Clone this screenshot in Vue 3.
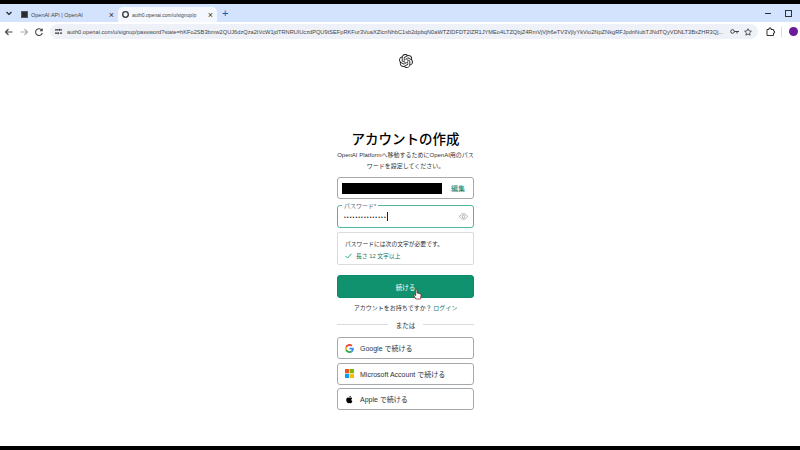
<script setup>
const url = 'auth0.openai.com/u/signup/password?state=hKFo2SB3bmw2QUJ6dzQza2tVcW1jdTRNRUlUczdPQU9tSEFpRKFur3VuaXZlcnNhbC1sb2dpbqN0aWTZIDFDT2lZR1JYMEo4LTZQbjZ4RmVjVjh6eTV3VjlyYkVio2NpZNkgRFJpdnNubTJNdTQyVDNLT3BxZHR3Qj...'
</script>

<template>
  <div class="screen">
    <div class="tabstrip">
      <svg class="chev" width="8" height="8" viewBox="0 0 8 8"><path d="M1.5 3l2.5 2.5L6.500 3" fill="none" stroke="#222" stroke-width="1.200"/></svg>
      <div class="tab">
        <span class="fav-api"></span>
        <span class="tab-title">OpenAI API | OpenAI</span>
        <span class="tab-x">×</span>
      </div>
      <div class="tab active">
        <svg class="fav-globe" width="7" height="7" viewBox="0 0 8 8"><circle cx="4" cy="4" r="3.200" fill="none" stroke="#333" stroke-width="1.500"/></svg>
        <span class="tab-title">auth0.openai.com/u/signup/p</span>
        <span class="tab-x">×</span>
      </div>
      <span class="plus">+</span>
      <div class="win">
        <span class="min"></span>
        <span class="restore"></span>
      </div>
    </div>

    <div class="toolbar">
      <svg width="10" height="10" viewBox="0 0 10 10"><path d="M8.500 5H2M4.500 2L1.500 5l3 3" fill="none" stroke="#444" stroke-width="1.100"/></svg>
      <svg width="10" height="10" viewBox="0 0 10 10"><path d="M1.500 5H8M5.500 2l3 3-3 3" fill="none" stroke="#aaa" stroke-width="1.100"/></svg>
      <svg width="10" height="10" viewBox="0 0 10 10"><path d="M8 3.500A3.400 3.400 0 1 0 8.300 6M8.200 1.500v2.300H5.900" fill="none" stroke="#444" stroke-width="1.100"/></svg>
      <div class="omnibox">
        <svg width="7" height="7" viewBox="0 0 7 7"><path d="M0 1.800h3.500M0 5.200h2M5 5.200h2M5.500 1.800H7" stroke="#333" stroke-width="1.200"/><circle cx="4.500" cy="1.800" r="1" fill="#333"/><circle cx="3.200" cy="5.200" r="1" fill="#333"/></svg>
        <span class="url">{{ url }}</span>
        <svg class="key" width="9" height="7" viewBox="0 0 9 7"><circle cx="2.500" cy="3.500" r="1.800" fill="none" stroke="#444"/><path d="M4.300 3.500H9M7 3.500v2" stroke="#444"/></svg>
        <svg width="8" height="8" viewBox="0 0 8 8"><path d="M4 .7l1 2.200 2.400.3-1.800 1.600.5 2.400L4 6 1.900 7.200l.5-2.400L.6 3.200 3 2.900z" fill="none" stroke="#333" stroke-width=".8"/></svg>
      </div>
      <svg class="ext" width="9" height="9" viewBox="0 0 9 9"><path d="M1 2.500h2V1h2v1.500h2.500V4H8.500v2H7.500v2.500H1z" fill="none" stroke="#333"/></svg>
      <span class="sep"></span>
      <span class="avatar"></span>
    </div>

    <main class="page">
      <svg class="logo" width="14" height="14" viewBox="0 0 24 24"><path fill="#202123" d="M22.2819 9.8211a5.9847 5.9847 0 0 0-.5157-4.9108 6.0462 6.0462 0 0 0-6.5098-2.9A6.0651 6.0651 0 0 0 4.9807 4.1818a5.9847 5.9847 0 0 0-3.9977 2.9 6.0462 6.0462 0 0 0 .7427 7.0966 5.98 5.98 0 0 0 .511 4.9107 6.051 6.051 0 0 0 6.5146 2.9001A5.9847 5.9847 0 0 0 13.2599 24a6.0557 6.0557 0 0 0 5.7718-4.2058 5.9894 5.9894 0 0 0 3.9977-2.9001 6.0557 6.0557 0 0 0-.7475-7.0729zm-9.022 12.6081a4.4755 4.4755 0 0 1-2.8764-1.0408l.1419-.0804 4.7783-2.7582a.7948.7948 0 0 0 .3927-.6813v-6.7369l2.02 1.1686a.071.071 0 0 1 .038.052v5.5826a4.504 4.504 0 0 1-4.4945 4.4944zm-9.6607-4.1254a4.4708 4.4708 0 0 1-.5346-3.0137l.142.0852 4.783 2.7582a.7712.7712 0 0 0 .7806 0l5.8428-3.3685v2.3324a.0804.0804 0 0 1-.0332.0615L9.74 19.9502a4.4992 4.4992 0 0 1-6.1408-1.6464zM2.3408 7.8956a4.485 4.485 0 0 1 2.3655-1.9728V11.6a.7664.7664 0 0 0 .3879.6765l5.8144 3.3543-2.0201 1.1685a.0757.0757 0 0 1-.071 0l-4.8303-2.7865A4.504 4.504 0 0 1 2.3408 7.872zm16.5963 3.8558L13.1038 8.364 15.1192 7.2a.0757.0757 0 0 1 .071 0l4.8303 2.7913a4.4944 4.4944 0 0 1-.6765 8.1042v-5.6772a.79.79 0 0 0-.407-.667zm2.0107-3.0231l-.142-.0852-4.7735-2.7818a.7759.7759 0 0 0-.7854 0L9.409 9.2297V6.8974a.0662.0662 0 0 1 .0284-.0615l4.8303-2.7866a4.4992 4.4992 0 0 1 6.6802 4.66zM8.3065 12.863l-2.02-1.1638a.0804.0804 0 0 1-.038-.0567V6.0742a4.4992 4.4992 0 0 1 7.3757-3.4537l-.142.0805L8.704 5.459a.7948.7948 0 0 0-.3927.6813zm1.0976-2.3654l2.602-1.4998 2.6069 1.4998v2.9994l-2.5974 1.4997-2.6067-1.4997Z"/></svg>

      <div class="form">
        <h1>アカウントの作成</h1>
        <p class="sub">OpenAI Platformへ移動するためにOpenAI用のパスワードを設定してください。</p>

        <div class="field email">
          <span class="redact"></span>
          <span class="edit">編集</span>
        </div>

        <div class="field pass">
          <span class="label">パスワード*</span>
          <span class="dots">•••••••••••••••</span><span class="caret"></span>
          <svg class="eye" width="9" height="7" viewBox="0 0 10 8"><path d="M.5 4C2 1.500 3.500.8 5 .8S8 1.500 9.500 4C8 6.500 6.500 7.200 5 7.200S2 6.500.5 4z" fill="none" stroke="#8a8f98" stroke-width=".8"/><circle cx="5" cy="4" r="1.500" fill="none" stroke="#8a8f98" stroke-width=".8"/></svg>
        </div>

        <div class="rules">
          <div>パスワードには次の文字が必要です。</div>
          <div class="rule">
            <svg width="7" height="6" viewBox="0 0 7 6"><path d="M.6 3l2 2L6.400.8" fill="none" stroke="#10a37f" stroke-width=".9"/></svg>
            <span>長さ 12 文字以上</span>
          </div>
        </div>

        <button class="continue">続ける
          <svg class="hand" width="9" height="11" viewBox="0 0 9 11"><path d="M2.800 10L.7 6.200l1-.5 1 1V1.500a.7.700 0 0 1 1.400 0V4l3 .7c.7.200 1 .6 1 1.200L7.500 10z" fill="#fff" stroke="#7a2b20" stroke-width=".8"/></svg>
        </button>

        <p class="login">アカウントをお持ちですか？ <span>ログイン</span></p>

        <div class="or"><span>または</span></div>

        <div class="socials">
          <button class="social">
            <svg width="9" height="9" viewBox="0 0 48 48"><path fill="#EA4335" d="M24 9.500c3.500 0 6.700 1.300 9.100 3.500l6.800-6.800C35.800 2.400 30.300 0 24 0 14.600 0 6.500 5.400 2.600 13.200l7.900 6.200C12.400 13.700 17.700 9.500 24 9.500z"/><path fill="#4285F4" d="M46.900 24.500c0-1.600-.1-3.100-.4-4.500H24v9h12.900c-.6 3-2.200 5.500-4.800 7.200l7.700 6c4.500-4.200 7.100-10.300 7.100-17.700z"/><path fill="#FBBC05" d="M10.500 28.600c-.5-1.400-.8-3-.8-4.600s.3-3.200.8-4.600l-7.900-6.200C.9 16.500 0 20.100 0 24s.9 7.500 2.600 10.800z"/><path fill="#34A853" d="M24 48c6.500 0 11.900-2.100 15.900-5.800l-7.700-6c-2.200 1.500-4.900 2.300-8.200 2.300-6.300 0-11.600-4.200-13.500-9.900l-7.900 6.200C6.500 42.600 14.600 48 24 48z"/></svg>
            <span>Google で続ける</span>
          </button>
          <button class="social">
            <svg width="9" height="9" viewBox="0 0 9 9"><rect width="4.200" height="4.200" fill="#f25022"/><rect x="4.800" width="4.200" height="4.200" fill="#7fba00"/><rect y="4.800" width="4.200" height="4.200" fill="#00a4ef"/><rect x="4.800" y="4.800" width="4.200" height="4.200" fill="#ffb900"/></svg>
            <span>Microsoft Account で続ける</span>
          </button>
          <button class="social">
            <svg width="9" height="9" viewBox="0 0 24 24"><path fill="#000" d="M17.050 12.600c0-2.600 2.100-3.800 2.200-3.900-1.200-1.800-3.100-2-3.700-2-1.600-.2-3.100.9-3.900.9s-2-.9-3.300-.9c-1.700 0-3.300 1-4.200 2.500-1.800 3.100-.5 7.700 1.300 10.200.9 1.200 1.900 2.600 3.200 2.600s1.800-.8 3.300-.8 2 .8 3.300.8 2.300-1.200 3.100-2.500c1-1.400 1.400-2.800 1.400-2.900-.1 0-2.700-1-2.700-4zM14.500 4.900c.7-.9 1.200-2 1-3.200-1 0-2.200.7-3 1.500-.6.800-1.200 2-1 3.100 1.100.1 2.300-.5 3-1.400z"/></svg>
            <span>Apple で続ける</span>
          </button>
        </div>
      </div>
    </main>
  </div>
</template>

<style scoped>
.screen {
  width: 800px;
  height: 450px;
  background: #000;
  padding: 4px 0;
  box-sizing: border-box;
  display: flex;
  flex-direction: column;
  overflow: hidden;
  font-family: "Liberation Sans", "Noto Sans CJK JP", sans-serif;
}

.tabstrip {
  height: 18px;
  background: #d3e3fd;
  display: flex;
  align-items: center;
  flex-shrink: 0;
}
.chev { margin: 0 4px 0 5px; }
.tab {
  width: 101px;
  height: 15px;
  margin-top: 3px;
  padding: 0 4px;
  box-sizing: border-box;
  display: flex;
  align-items: center;
  gap: 3px;
  font-size: 5.500px;
  color: #444;
}
.tab.active {
  width: 99px;
  background: #f4f8fe;
  border-radius: 5px 5px 0 0;
}
.tab-title {
  white-space: nowrap;
}
.active .tab-title { font-size: 5px; }
.tab-x { margin-left: auto; font-size: 9px; color: #333; line-height: 8px; }
.fav-api { width: 7px; height: 7px; background: #2b2b2b; border: 1px solid #555; box-sizing: border-box; flex-shrink: 0; }
.fav-globe { flex-shrink: 0; }
.plus { font-size: 11px; margin-left: 5px; color: #1a56b8; line-height: 11px; }
.win { margin-left: auto; display: flex; align-items: center; gap: 14px; padding-right: 8px; }
.min { width: 6px; height: 1px; background: #333; }
.restore { width: 5px; height: 5px; border: 1px solid #333; }

.toolbar {
  height: 19px;
  background: #fff;
  display: flex;
  align-items: center;
  gap: 5px;
  padding-left: 4px;
  flex-shrink: 0;
}
.toolbar svg { flex-shrink: 0; }
.omnibox {
  width: 708px;
  height: 15px;
  margin-left: 1px;
  padding: 0 6px 0 5px;
  box-sizing: border-box;
  background: #eef2f8;
  border-radius: 8px;
  display: flex;
  align-items: center;
  gap: 5px;
  flex-shrink: 0;
}
.url {
  font-size: 5.700px;
  color: #444;
  white-space: nowrap;
}
.key { margin-left: auto; }
.ext { margin-left: 3px; }
.sep { width: 1px; height: 10px; background: #ddd; margin-left: 1px; }
.avatar { width: 9px; height: 9px; border-radius: 50%; background: #6a1b9a; margin-left: 2px; }

.page {
  flex: 1;
  background: #fff;
  display: flex;
  flex-direction: column;
  align-items: center;
  padding-top: 13px;
}
.logo { margin-left: 11px; }

.form {
  width: 137px;
  margin-top: 62px;
  margin-left: 11px;
  color: #2d333a;
}
h1 {
  margin: 0;
  font-size: 13.500px;
  line-height: 20px;
  font-weight: 500;
  color: #000;
  text-align: center;
  white-space: nowrap;
}
.sub {
  margin: 0;
  font-size: 6px;
  line-height: 11px;
  text-align: center;
}

.field {
  position: relative;
  border-radius: 3px;
  box-sizing: border-box;
  display: flex;
  align-items: center;
}
.email {
  height: 22px;
  margin-top: 5px;
  border: 1px solid #a5a9ae;
  padding: 0 8px 0 4px;
  justify-content: space-between;
}
.redact { width: 100px; height: 11px; background: #000; }
.edit { font-size: 7px; color: #10795f; }
.pass {
  height: 23px;
  margin-top: 6px;
  border: 1px solid #4fb79d;
  padding: 0 5px 0 6px;
}
.label {
  position: absolute;
  top: -4px;
  left: 4px;
  padding: 0 2px;
  background: #fff;
  font-size: 6px;
  line-height: 8px;
  color: #5c6670;
}
.dots { font-size: 5px; letter-spacing: 1.100px; color: #222; }
.caret { width: 1px; height: 9px; background: #222; }
.eye { margin-left: auto; }

.rules {
  margin-top: 4px;
  height: 33px;
  padding: 6px 7px;
  box-sizing: border-box;
  border: 1px solid #d8dbdf;
  border-radius: 2px;
  font-size: 5.800px;
  line-height: 10px;
  white-space: nowrap;
}
.rule {
  margin-top: 2px;
  display: flex;
  align-items: center;
  gap: 4px;
  color: #10795f;
}

.continue {
  position: relative;
  display: block;
  width: 100%;
  height: 23px;
  margin-top: 10px;
  border: 1px solid #0d8a6b;
  border-radius: 3px;
  background: #10926f;
  color: #fff;
  font-family: inherit;
  font-size: 6.500px;
  padding: 0;
}
.hand {
  position: absolute;
  left: 75px;
  top: 13px;
}
.login {
  margin: 5px 0 0;
  font-size: 6px;
  line-height: 11px;
  text-align: center;
}
.login span { color: #10795f; }
.or {
  margin-top: 5px;
  height: 11px;
  display: flex;
  align-items: center;
  gap: 8px;
  font-size: 6.500px;
}
.or::before, .or::after {
  content: "";
  flex: 1;
  height: 1px;
  background: #d8dbdf;
}
.socials {
  margin-top: 7px;
  display: flex;
  flex-direction: column;
  gap: 3.500px;
}
.social {
  height: 22px;
  border: 1px solid #a5a9ae;
  border-radius: 3px;
  background: #fff;
  display: flex;
  align-items: center;
  gap: 6px;
  padding: 0 0 0 7px;
  font-family: inherit;
  font-size: 7px;
  color: #2d333a;
}
</style>
